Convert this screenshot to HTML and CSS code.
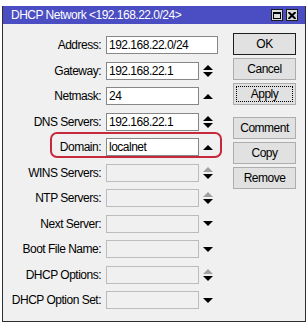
FILE: index.html
```html
<!DOCTYPE html>
<html lang="en">

<head>
    <meta charset="UTF-8">
    <meta name="viewport" content="width=device-width, initial-scale=1.0">
    <title>DHCP Network</title>
    <link rel="stylesheet" href="styles.css">
</head>

<body>
    <div class="window">
        <div class="titlebar">
            <span class="title">DHCP Network &lt;192.168.22.0/24&gt;</span>
            <div class="title-btns">
                <span class="tbtn">
                    <svg width="8" height="7" viewBox="0 0 8 7"><rect x="0.5" y="0.5" width="7" height="6" fill="none" stroke="#000"/><rect x="0" y="0" width="8" height="2" fill="#000"/></svg>
                </span>
                <span class="tbtn">
                    <svg width="8" height="7" viewBox="0 0 8 7"><path d="M0.5 0 L7.5 7 M7.5 0 L0.5 7" stroke="#000" stroke-width="2"/></svg>
                </span>
            </div>
        </div>

        <div class="content">
            <div class="form">
                <div class="row">
                    <label>Address:</label>
                    <input class="field wide" value="192.168.22.0/24">
                </div>
                <div class="row">
                    <label>Gateway:</label>
                    <input class="field" value="192.168.22.1">
                    <span class="arrow"><svg width="10" height="12" viewBox="0 0 10 12"><polygon points="5,0 10,5 0,5" fill="#000"/><polygon points="0,7 10,7 5,12" fill="#000"/></svg></span>
                </div>
                <div class="row">
                    <label>Netmask:</label>
                    <input class="field" value="24">
                    <span class="arrow"><svg width="10" height="5" viewBox="0 0 10 5"><polygon points="5,0 10,5 0,5" fill="#000"/></svg></span>
                </div>
                <div class="row">
                    <label>DNS Servers:</label>
                    <input class="field" value="192.168.22.1">
                    <span class="arrow"><svg width="10" height="12" viewBox="0 0 10 12"><polygon points="5,0 10,5 0,5" fill="#000"/><polygon points="0,7 10,7 5,12" fill="#000"/></svg></span>
                </div>
                <div class="row marked">
                    <label>Domain:</label>
                    <input class="field" value="localnet">
                    <span class="arrow"><svg width="10" height="5" viewBox="0 0 10 5"><polygon points="5,0 10,5 0,5" fill="#000"/></svg></span>
                    <span class="highlight"></span>
                </div>
                <div class="row">
                    <label>WINS Servers:</label>
                    <input class="field" disabled>
                    <span class="arrow"><svg width="10" height="12" viewBox="0 0 10 12"><polygon points="5,0 10,5 0,5" fill="#a0a0a0"/><polygon points="0,7 10,7 5,12" fill="#000"/></svg></span>
                </div>
                <div class="row">
                    <label>NTP Servers:</label>
                    <input class="field" disabled>
                    <span class="arrow"><svg width="10" height="12" viewBox="0 0 10 12"><polygon points="5,0 10,5 0,5" fill="#a0a0a0"/><polygon points="0,7 10,7 5,12" fill="#000"/></svg></span>
                </div>
                <div class="row">
                    <label>Next Server:</label>
                    <input class="field" disabled>
                    <span class="arrow"><svg width="10" height="5" viewBox="0 0 10 5"><polygon points="0,0 10,0 5,5" fill="#000"/></svg></span>
                </div>
                <div class="row">
                    <label>Boot File Name:</label>
                    <input class="field" disabled>
                    <span class="arrow"><svg width="10" height="5" viewBox="0 0 10 5"><polygon points="0,0 10,0 5,5" fill="#000"/></svg></span>
                </div>
                <div class="row">
                    <label>DHCP Options:</label>
                    <input class="field" disabled>
                    <span class="arrow"><svg width="10" height="12" viewBox="0 0 10 12"><polygon points="5,0 10,5 0,5" fill="#a0a0a0"/><polygon points="0,7 10,7 5,12" fill="#000"/></svg></span>
                </div>
                <div class="row">
                    <label>DHCP Option Set:</label>
                    <input class="field" disabled>
                    <span class="arrow"><svg width="10" height="5" viewBox="0 0 10 5"><polygon points="0,0 10,0 5,5" fill="#000"/></svg></span>
                </div>
            </div>

            <div class="buttons">
                <button class="btn default">OK</button>
                <button class="btn">Cancel</button>
                <button class="btn focused">Apply</button>
                <button class="btn spaced">Comment</button>
                <button class="btn">Copy</button>
                <button class="btn">Remove</button>
            </div>
        </div>
    </div>
</body>

</html>
```

FILE: styles.css
```css
body {
    margin: 0;
    background: #fff;
    font-family: "Liberation Sans", Arial, sans-serif;
    font-size: 12px;
    letter-spacing: -0.5px;
}

.window {
    box-sizing: border-box;
    width: 304px;
    height: 316px;
    margin: 6px 0 0 2px;
    border: 1px solid #2e2e2e;
    border-top: none;
    background: #f0f0f0;
}

.titlebar {
    height: 18px;
    background: #4b4dc3;
    color: #fff;
    display: flex;
    align-items: center;
    justify-content: space-between;
    padding: 0 7px 0 8px;
}

.title {
    line-height: 18px;
}

.title-btns {
    display: flex;
    gap: 3px;
}

.tbtn {
    box-sizing: border-box;
    width: 12px;
    height: 12px;
    border: 1px solid #1c1c1c;
    background: #dcdcdc;
    display: flex;
    align-items: center;
    justify-content: center;
}

.content {
    display: flex;
    align-items: flex-start;
}

.form {
    display: flex;
    flex-direction: column;
    gap: 7.5px;
    padding-top: 12px;
    width: 214px;
}

.row {
    display: flex;
    align-items: center;
    height: 18px;
    position: relative;
}

.row label {
    width: 98px;
    text-align: right;
    flex-shrink: 0;
}

.field {
    box-sizing: border-box;
    width: 93px;
    height: 18px;
    margin: 0 0 0 5px;
    padding: 0 2px;
    border: 1px solid #878787;
    background: #fff;
    font-family: inherit;
    font-size: 12px;
    letter-spacing: -0.5px;
    color: #000;
}

.field.wide {
    width: 112px;
}

.field:disabled {
    border-color: #bcbcbc;
    background: #f0f0f0;
}

.arrow {
    width: 18px;
    display: flex;
    justify-content: center;
    align-items: center;
}

.highlight {
    position: absolute;
    left: 47px;
    top: -6px;
    width: 172px;
    height: 26px;
    box-sizing: border-box;
    border: 2px solid #c8283c;
    border-radius: 7px;
}

.buttons {
    display: flex;
    flex-direction: column;
    gap: 3px;
    padding-top: 9px;
    margin-left: 16px;
}

.btn {
    box-sizing: border-box;
    width: 63px;
    height: 22px;
    padding: 0;
    border: 1px solid #adadad;
    background: #e1e1e1;
    font-family: inherit;
    font-size: 12px;
    letter-spacing: -0.5px;
    color: #000;
}

.btn.default {
    border-color: #1e1e1e;
}

.btn.focused {
    outline: 1px dotted #000;
    outline-offset: -4px;
}

.btn.spaced {
    margin-top: 9px;
}
```
